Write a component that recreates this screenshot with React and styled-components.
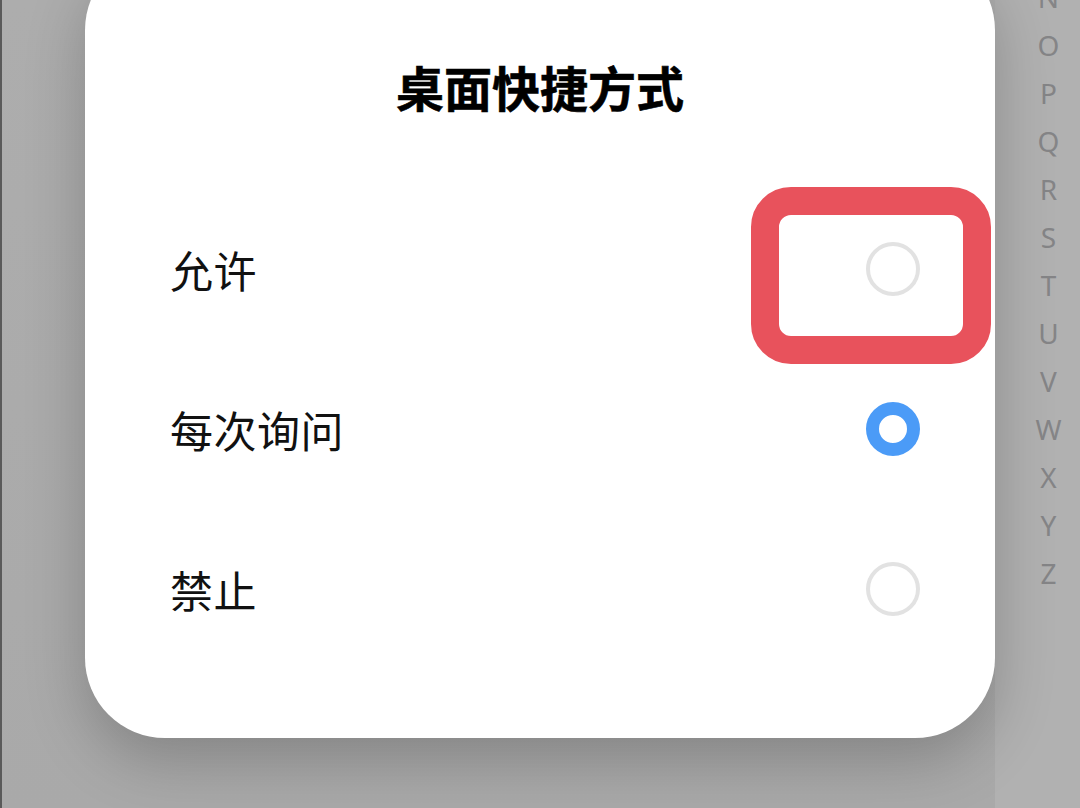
import React from "react";
import styled, { createGlobalStyle } from "styled-components";

const Global = createGlobalStyle`
  html, body {
    margin: 0;
    padding: 0;
    width: 1080px;
    height: 808px;
    overflow: hidden;
    background: #ababab;
    font-family: "Noto Sans CJK SC", "Noto Sans", sans-serif;
  }
`;

const Screen = styled.div`
  width: 1080px;
  height: 808px;
  display: flex;
  flex-direction: row;
  overflow: hidden;
  background: linear-gradient(180deg, #adadad 0%, #a9a9a9 100%);
  border-left: 2px solid #5a5a5a;
  box-sizing: border-box;
`;

const Gutter = styled.div`
  width: 83px;
  flex: none;
`;

const Dialog = styled.div`
  position: relative;
  width: 910px;
  flex: none;
  align-self: flex-start;
  margin-top: -50px;
  padding: 92px 0 69px;
  background: #ffffff;
  border-radius: 80px;
  box-shadow: 0 22px 60px rgba(0, 0, 0, 0.22);
  display: flex;
  flex-direction: column;
  z-index: 1;
`;

const Title = styled.h1`
  margin: 0;
  height: 88px;
  line-height: 88px;
  text-align: center;
  font-size: 48px;
  font-weight: 700;
  color: #000;
  -webkit-text-stroke: 0.6px #000;
`;

const List = styled.div`
  margin-top: 59px;
  display: flex;
  flex-direction: column;
`;

const Row = styled.div`
  height: 160px;
  display: flex;
  align-items: center;
  justify-content: space-between;
  padding: 0 75px 0 85px;
`;

const Label = styled.span`
  font-size: 43px;
  color: #111;
  letter-spacing: 0.5px;
`;

const Radio = styled.span`
  width: 54px;
  height: 54px;
  box-sizing: border-box;
  border-radius: 50%;
  border: ${(p) => (p.$checked ? "13px solid #4b9bf7" : "4.5px solid #e2e2e2")};
  background: #fff;
`;

const Highlight = styled.div`
  position: absolute;
  left: 666px;
  top: 237px;
  width: 240px;
  height: 177px;
  box-sizing: border-box;
  border: 28px solid #e8525c;
  border-radius: 40px;
  pointer-events: none;
`;

const Index = styled.div`
  flex: 1;
  background: #b1b1b1;
  display: flex;
  flex-direction: column;
  align-items: center;
  margin-top: -27px;
`;

const Letter = styled.span`
  height: 48px;
  line-height: 48px;
  font-family: "Noto Sans", "Liberation Sans", sans-serif;
  font-size: 28px;
  font-weight: 400;
  color: #858587;
  padding-left: 22px;
`;

const options = [
  { label: "允许", checked: false },
  { label: "每次询问", checked: true },
  { label: "禁止", checked: false },
];

const letters = ["N", "O", "P", "Q", "R", "S", "T", "U", "V", "W", "X", "Y", "Z"];

export default function App() {
  return (
    <>
      <Global />
      <Screen>
        <Gutter />
        <Dialog>
          <Title>桌面快捷方式</Title>
          <List>
            {options.map((o) => (
              <Row key={o.label}>
                <Label>{o.label}</Label>
                <Radio $checked={o.checked} />
              </Row>
            ))}
          </List>
          <Highlight />
        </Dialog>
        <Index>
          {letters.map((l) => (
            <Letter key={l}>{l}</Letter>
          ))}
        </Index>
      </Screen>
    </>
  );
}
